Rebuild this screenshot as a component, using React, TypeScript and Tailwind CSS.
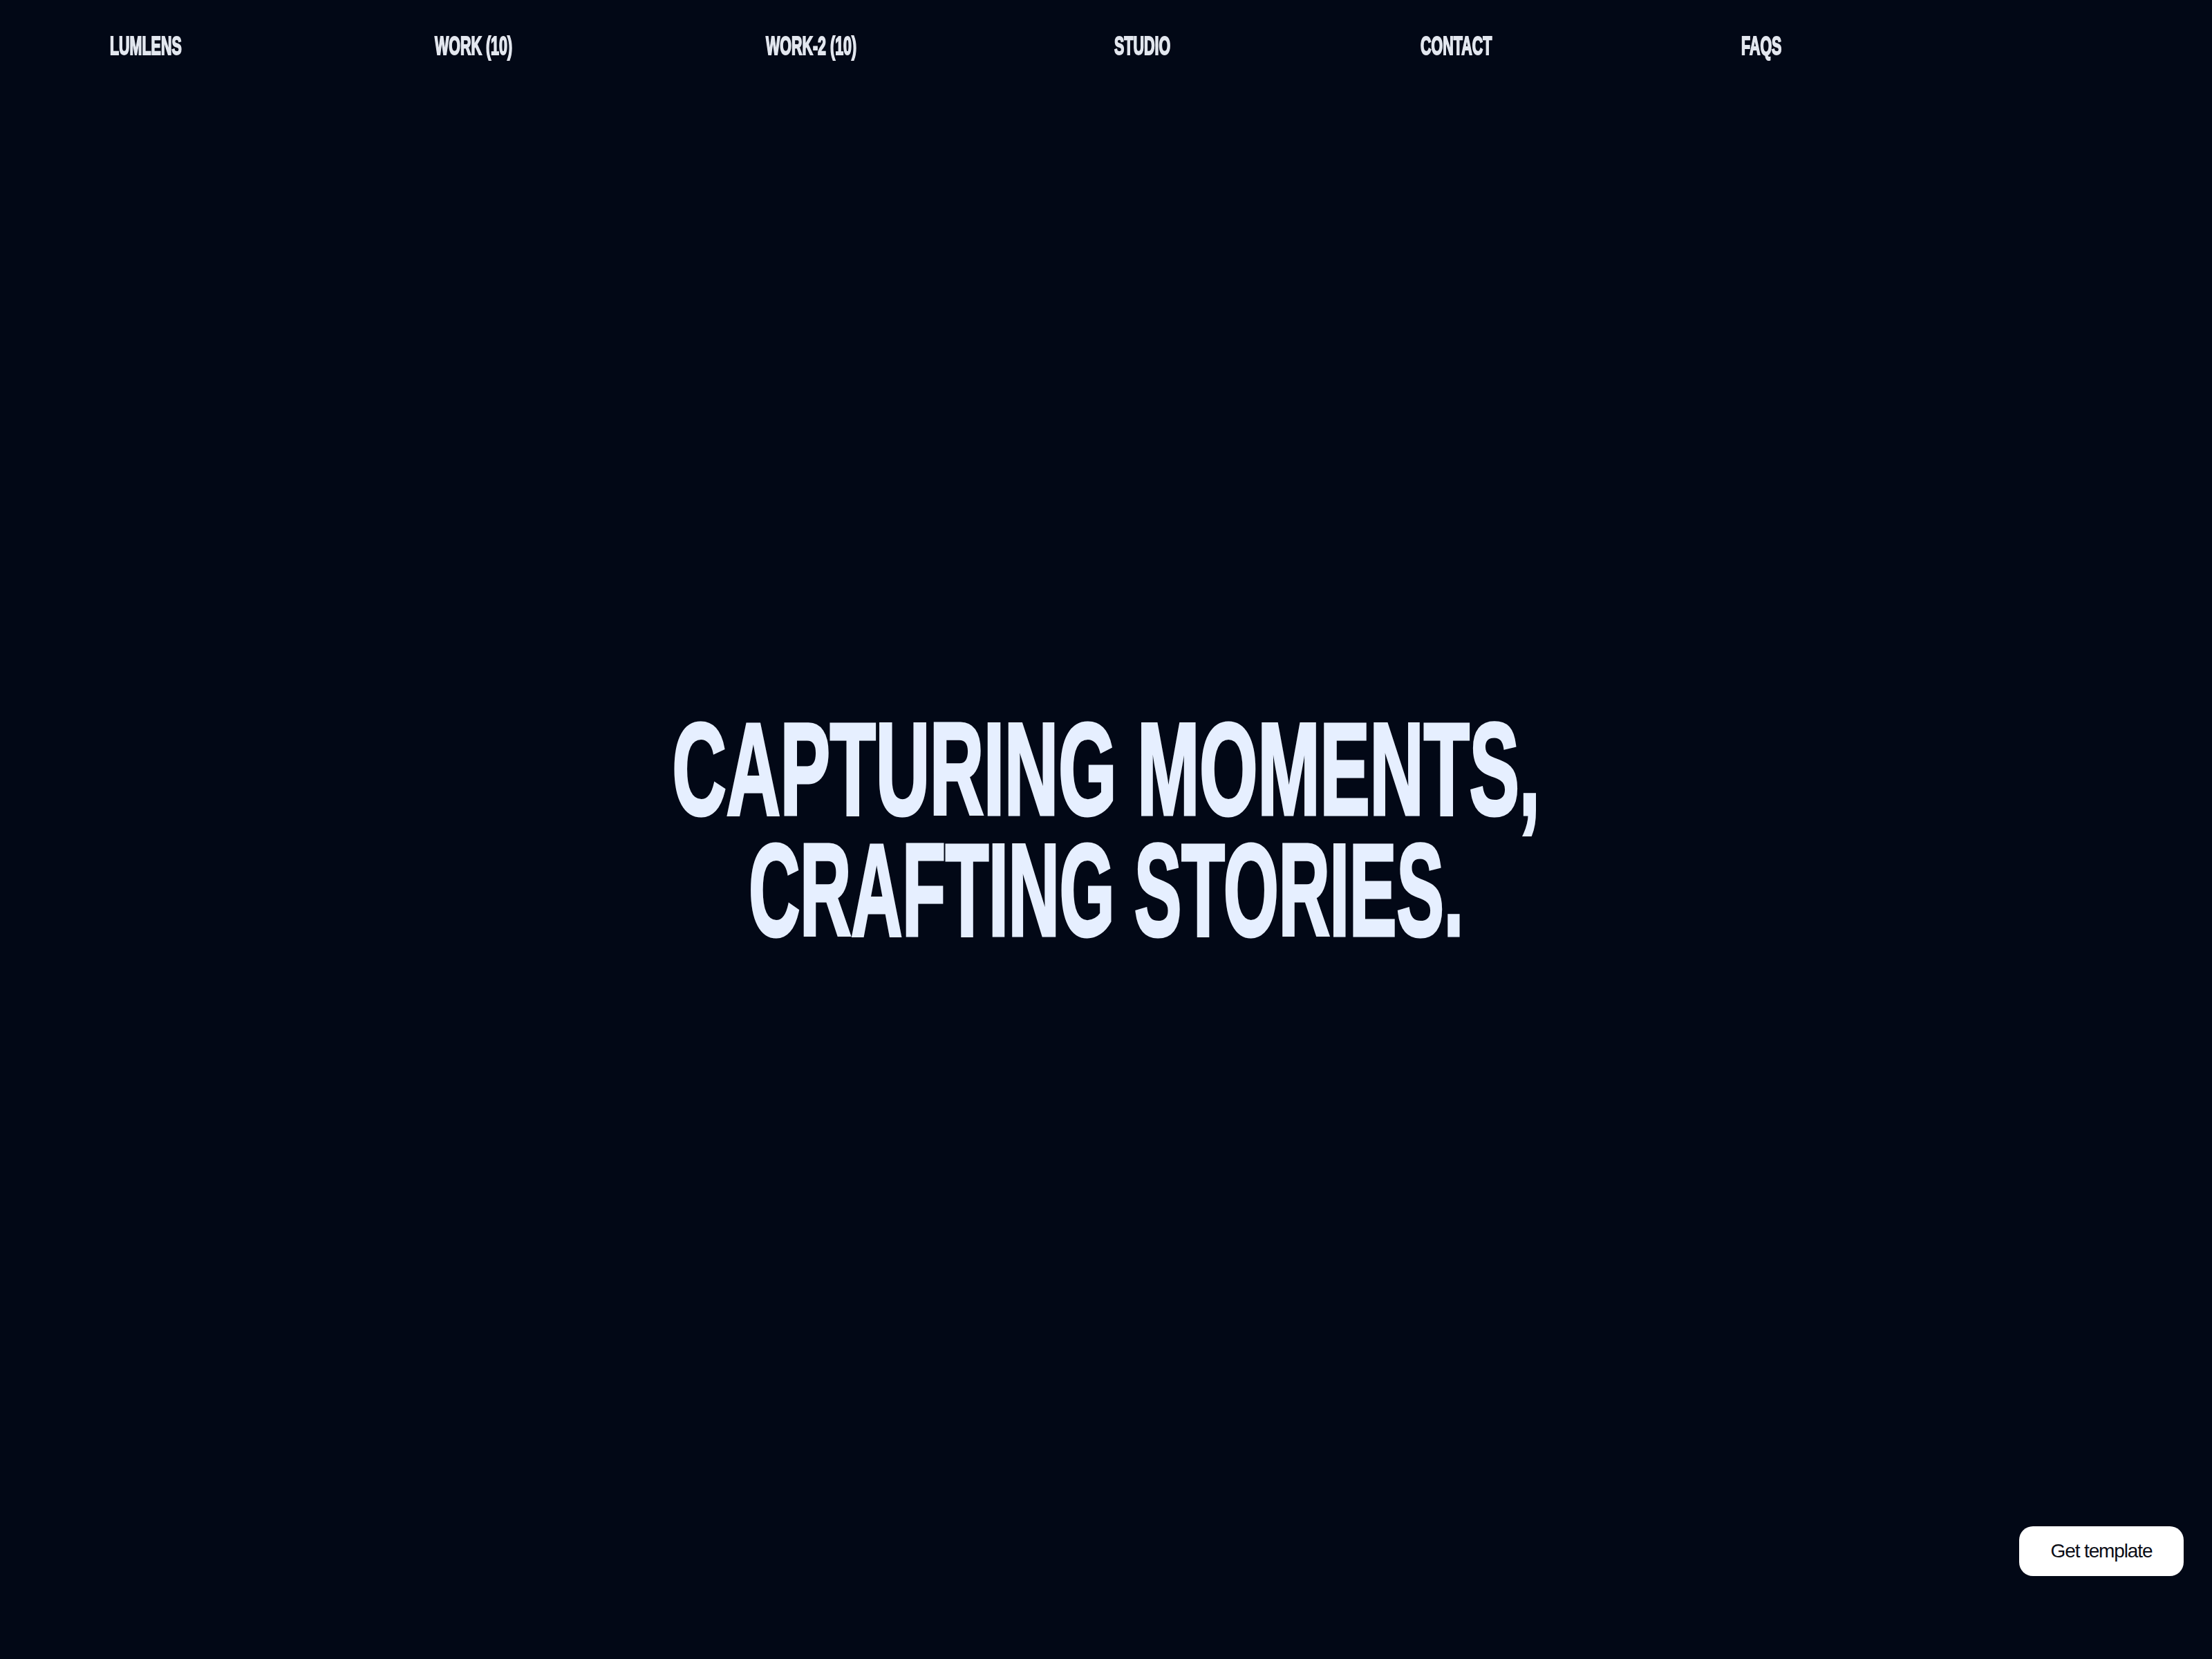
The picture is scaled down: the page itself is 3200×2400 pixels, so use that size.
import React from 'react';

const navItems = [
  { label: 'LUMLENS', w: 'w-[470px]' },
  { label: 'WORK (10)', w: 'w-[479px]' },
  { label: 'WORK-2 (10)', w: 'w-[504px]' },
  { label: 'STUDIO', w: 'w-[443px]' },
  { label: 'CONTACT', w: 'w-[464px]' },
  { label: 'FAQS', w: 'w-auto' },
];

export default function App() {
  return (
    <div className="relative min-h-screen bg-[#020816] font-['Liberation_Sans',Arial,sans-serif]">
      {/* Header */}
      <nav className="fixed top-0 left-0 right-0 flex pl-[159px] pt-[48px]">
        {navItems.map((item) => (
          <a key={item.label} href="#" className={`${item.w} shrink-0 text-[37px] leading-none font-bold text-[#e3e7ef]`}>
            <span className="inline-block whitespace-nowrap origin-left scale-x-[0.58] [-webkit-text-stroke:2px_#e3e7ef]">
              {item.label}
            </span>
          </a>
        ))}
      </nav>

      {/* Hero */}
      <main className="flex h-screen items-center justify-center">
        <h1 className="text-center text-[189px] leading-[175px] font-bold text-[#e6efff] [-webkit-text-stroke:5px_#e6efff]">
          <span className="block whitespace-nowrap origin-center scale-x-[0.572]">CAPTURING MOMENTS,</span>
          <span className="block whitespace-nowrap origin-center scale-x-[0.542]">CRAFTING STORIES.</span>
        </h1>
      </main>

      {/* Floating button */}
      <a
        href="#"
        className="fixed right-[41px] bottom-[120px] flex h-[72px] w-[238px] items-center justify-center rounded-[20px] bg-white text-[28px] tracking-[-0.04em] text-[#0b0d16]"
      >
        Get template
      </a>
    </div>
  );
}
